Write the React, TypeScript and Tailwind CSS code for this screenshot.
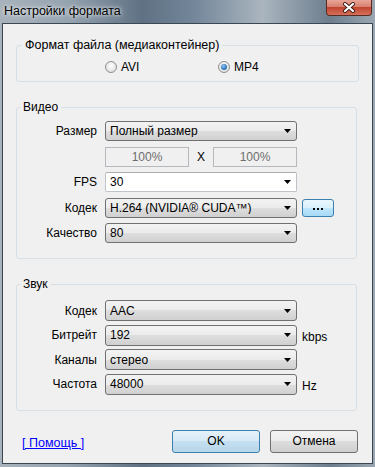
import clsx from "clsx";

const font = "font-['Liberation_Sans',Arial,sans-serif]";

function Combo({ value, editable }: { value: string; editable?: boolean }) {
  return (
    <div
      className={clsx(
        "flex h-full w-[192px] items-center border pl-[4px] pr-[5px]",
        editable
          ? "rounded-[2px] border-[#bfc3c8] border-t-[#abadb3] bg-white"
          : "rounded-[3px] border-[#707070] bg-[linear-gradient(#f3f3f3_0%,#ebebeb_50%,#dedede_50%,#d0d0d0_100%)]"
      )}
    >
      <span className="flex-1 truncate leading-none">{value}</span>
      <svg width="7" height="4" viewBox="0 0 7 4">
        <path d="M0 0h7L3.5 4z" fill="#000" />
      </svg>
    </div>
  );
}

function Row({ label, children, h = "h-[20px]" }: { label: string; children: React.ReactNode; h?: string }) {
  return (
    <div className={clsx("flex items-center", h)}>
      <span className="w-[80px] text-right">{label}</span>
      <div className="ml-[8px] flex h-full items-center">{children}</div>
    </div>
  );
}

function Radio({ label, checked }: { label: string; checked?: boolean }) {
  return (
    <div className="flex items-center gap-[4px]">
      <span className="flex h-[12px] w-[12px] items-center justify-center rounded-full border border-[#8e8f8f] bg-[radial-gradient(circle_at_50%_40%,#ffffff_0%,#e2e2e2_70%,#cfcfcf_100%)]">
        {checked && (
          <span className="h-[6px] w-[6px] rounded-full bg-[radial-gradient(circle_at_40%_35%,#8fc4ee_0%,#2e75bd_60%,#1c4f8c_100%)]" />
        )}
      </span>
      <span>{label}</span>
    </div>
  );
}

export default function App() {
  return (
    <div
      className={clsx(
        "flex h-[467px] w-[375px] flex-col overflow-hidden px-[2px] pb-[3px] text-[12px] text-black",
        "bg-[linear-gradient(90deg,#a7b2bc_0%,#95a3b0_18%,#5f7183_38%,#74879a_52%,#aab5bf_70%,#6d7e8e_88%,#9aa7b2_100%)]",
        font
      )}
    >
      <div className="flex h-[23px] shrink-0 items-start">
        <span className="pl-[2px] pt-[4px] text-[12.5px] leading-[15px] text-black [text-shadow:0_0_6px_#ffffffcc,0_0_3px_#ffffffcc]">
          Настройки формата
        </span>
        <div className="ml-auto mr-[1px] flex h-[16px] w-[46px] items-center justify-center rounded-b-[4px] border border-t-0 border-[#5b2a23] bg-[linear-gradient(#e9a598_0%,#d7806f_45%,#c3452f_50%,#d3705c_100%)]">
          <svg width="14" height="11" viewBox="0 0 14 11">
            <path d="M3 2l8 7M11 2l-8 7" stroke="#3d1c17" strokeWidth="4" strokeLinecap="round" />
            <path d="M3 2l8 7M11 2l-8 7" stroke="#ffffff" strokeWidth="2.2" strokeLinecap="round" />
          </svg>
        </div>
      </div>

      <div className="flex flex-1 flex-col border border-[#3b4753] bg-[#f0f0f0] pt-[14px]">
        <fieldset className="mx-[13px] rounded-[3px] border border-[#d5dfe5] pb-[7px] pt-[8px]">
          <legend className="ml-[5px] px-[3px] text-[12.5px] leading-[14px]">Формат файла (медиаконтейнер)</legend>
          <div className="flex h-[14px] items-center pl-[88px]">
            <div className="w-[113px]">
              <Radio label="AVI" />
            </div>
            <Radio label="MP4" checked />
          </div>
        </fieldset>

        <fieldset className="ml-[13px] mr-[15px] mt-[18px] flex flex-col gap-[5.5px] rounded-[3px] border border-[#d5dfe5] pb-[15px] pt-[7px]">
          <legend className="ml-[3px] px-[3px] leading-[14px]">Видео</legend>
          <Row label="Размер">
            <Combo value="Полный размер" />
          </Row>
          <Row label="">
            <div className="flex h-full w-[192px] items-center">
              <div className="flex h-full w-[84px] items-center justify-center border border-[#b5b9bd] bg-[#f0f0f0] text-[#6d6d6d]">
                100%
              </div>
              <span className="flex-1 text-center">X</span>
              <div className="flex h-full w-[84px] items-center justify-center border border-[#b5b9bd] bg-[#f0f0f0] text-[#6d6d6d]">
                100%
              </div>
            </div>
          </Row>
          <Row label="FPS">
            <Combo value="30" editable />
          </Row>
          <Row label="Кодек">
            <Combo value="H.264 (NVIDIA® CUDA™)" />
            <div className="ml-[5px] flex h-[18px] w-[32px] items-center justify-center gap-[2px] rounded-[3px] border border-[#3c7fb1] bg-[linear-gradient(#eaf6fd_0%,#d9f0fc_50%,#bee6fd_50%,#a7d9f5_100%)] pt-[3px]">
              <span className="h-[2px] w-[2px] bg-black" />
              <span className="h-[2px] w-[2px] bg-black" />
              <span className="h-[2px] w-[2px] bg-black" />
            </div>
          </Row>
          <Row label="Качество">
            <Combo value="80" />
          </Row>
        </fieldset>

        <fieldset className="ml-[13px] mr-[15px] mt-[18px] flex flex-col gap-[3.5px] rounded-[3px] border border-[#d5dfe5] pb-[15px] pt-[9px]">
          <legend className="ml-[3px] px-[3px] leading-[14px]">Звук</legend>
          <Row label="Кодек" h="h-[21px]">
            <Combo value="AAC" />
          </Row>
          <Row label="Битрейт" h="h-[21px]">
            <Combo value="192" />
            <span className="ml-[5px] pt-[4px]">kbps</span>
          </Row>
          <Row label="Каналы" h="h-[21px]">
            <Combo value="стерео" />
          </Row>
          <Row label="Частота" h="h-[21px]">
            <Combo value="48000" />
            <span className="ml-[5px] pt-[4px]">Hz</span>
          </Row>
        </fieldset>

        <div className="mt-[19px] flex items-center pl-[19px] pr-[14px]">
          <a className="whitespace-pre pt-[4px] text-[12.5px] text-[#0000ff] underline">[ Помощь ]</a>
          <div className="ml-auto flex gap-[10px]">
            <button className="flex h-[23px] w-[88px] items-center justify-center rounded-[3px] border border-[#3c7fb1] bg-[linear-gradient(#e5f1f9_0%,#d7e9f5_50%,#c4dff0_50%,#b8d6ea_100%)]">
              OK
            </button>
            <button className="flex h-[23px] w-[88px] items-center justify-center rounded-[3px] border border-[#707070] bg-[linear-gradient(#f3f3f3_0%,#ebebeb_50%,#dddddd_50%,#cfcfcf_100%)]">
              Отмена
            </button>
          </div>
        </div>
      </div>
    </div>
  );
}
